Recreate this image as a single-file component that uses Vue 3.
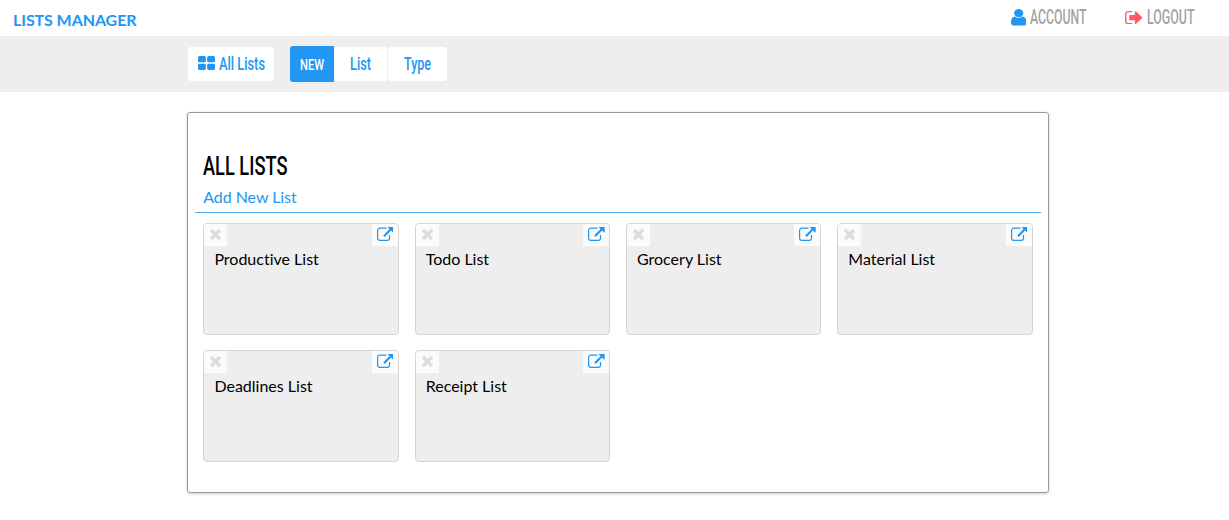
<script setup>
import { h } from 'vue'

const lists = ['Productive List', 'Todo List', 'Grocery List', 'Material List', 'Deadlines List', 'Receipt List']

const cell = 'v384q0 52-38 90t-90 38h-512q-52 0-90-38t-38-90v-384q0-52 38-90t90-38h512q52 0 90 38t38 90z'
const icons = {
  user: {
    box: '256 128 1280 1536',
    d: 'M1536 1399q0 109-62.5 187t-150.5 78h-854q-88 0-150.5-78t-62.5-187q0-85 8.5-160.5t31.5-152 58.5-131 94-89 134.5-34.5q131 128 313 128t313-128q76 0 134.5 34.5t94 89 58.5 131 31.5 152 8.5 160.5zm-256-887q0 159-112.5 271.5t-271.5 112.5-271.5-112.5-112.5-271.5 112.5-271.5 271.5-112.5 271.5 112.5 112.5 271.5z'
  },
  exit: {
    box: '64 256 1568 1280',
    d: 'M704 1440q0 4 1 20t.5 26.5-3 23.5-10 19.5-20.5 6.5h-320q-119 0-203.5-84.5t-84.5-203.5v-704q0-119 84.5-203.5t203.5-84.5h320q13 0 22.5 9.5t9.5 22.5q0 4 1 20t.5 26.5-3 23.5-10 19.5-20.5 6.5h-320q-66 0-113 47t-47 113v704q0 66 47 113t113 47h312l11.5 1 11.5 3 8 5.5 7 9 2 13.5zm928-544q0 26-19 45l-544 544q-19 19-45 19t-45-19-19-45v-288h-448q-26 0-45-19t-19-45v-384q0-26 19-45t45-19h448v-288q0-26 19-45t45-19 45 19l544 544q19 19 19 45z'
  },
  grid: {
    box: '64 128 1664 1408',
    d: `M832 1024${cell}M832 256${cell}M1728 1024${cell}M1728 256${cell}`
  },
  open: {
    box: '0 64 1792 1472',
    d: 'M1408 928v320q0 119-84.5 203.5t-203.5 84.5h-832q-119 0-203.5-84.5t-84.5-203.5v-832q0-119 84.5-203.5t203.5-84.5h704q14 0 23 9t9 23v64q0 14-9 23t-23 9h-704q-66 0-113 47t-47 113v832q0 66 47 113t113 47h832q66 0 113-47t47-113v-320q0-14 9-23t23-9h64q14 0 23 9t9 23zm384-864v512q0 26-19 45t-45 19-45-19l-176-176-652 652q-10 10-23 10t-23-10l-114-114q-10-10-10-23t10-23l652-652-176-176q-19-19-19-45t19-45 45-19h512q26 0 45 19t19 45z'
  },
  close: {
    box: '302 366 1188 1188',
    d: 'M1490 1322q0 40-28 68l-136 136q-28 28-68 28t-68-28l-294-294-294 294q-28 28-68 28t-68-28l-136-136q-28-28-28-68t28-68l294-294-294-294q-28-28-28-68t28-68l136-136q28-28 68-28t68 28l294 294 294-294q28-28 68-28t68 28l136 136q28 28 28 68t-28 68l-294 294 294 294q28 28 28 68z'
  }
}

const Icon = ({ name }) =>
  h('svg', { viewBox: icons[name].box, preserveAspectRatio: 'none', fill: 'currentColor', 'aria-hidden': 'true' }, [
    h('path', { d: icons[name].d })
  ])
Icon.props = ['name']

// Condensed label: the text is fitted to the given width.
const Narrow = ({ text, width, height }) =>
  h('svg', { width, height, overflow: 'visible', fill: 'currentColor' }, [
    h('text', { x: 0, y: height, textLength: width, lengthAdjust: 'spacingAndGlyphs' }, text)
  ])
Narrow.props = ['text', 'width', 'height']
</script>

<template>
  <div class="page">
    <header class="top">
      <span class="brand">LISTS MANAGER</span>
      <nav class="user-nav">
        <a class="account"><Icon name="user" class="i-user" /><Narrow text="ACCOUNT" :width="56.5" :height="14" /></a>
        <a class="logout"><Icon name="exit" class="i-exit" /><Narrow text="LOGOUT" :width="47.5" :height="14" /></a>
      </nav>
    </header>
    <div class="toolbar">
      <a class="btn all"><Icon name="grid" class="i-grid" /><Narrow text="All Lists" :width="46" :height="13.6" /></a>
      <div class="group">
        <span class="new"><Narrow text="NEW" :width="24" :height="12" /></span>
        <a class="btn list"><Narrow text="List" :width="21" :height="13.6" /></a>
        <a class="btn type"><Narrow text="Type" :width="27" :height="13.6" /></a>
      </div>
    </div>
    <main class="panel">
      <h1><Narrow text="ALL LISTS" :width="84.5" :height="19" /></h1>
      <a class="add">Add New List</a>
      <div class="rule"></div>
      <div class="tiles">
        <article v-for="name in lists" :key="name" class="tile">
          <div class="tile-bar">
            <span class="x-box"><Icon name="close" class="i-close" /></span>
            <span class="open-box"><Icon name="open" class="i-open" /></span>
          </div>
          <p>{{ name }}</p>
        </article>
      </div>
    </main>
  </div>
</template>

<style>
body { margin: 0; background: #fff; }
</style>

<style scoped>
.page { height: 520px; overflow: hidden; font: 16px/24px Lato, sans-serif; font-variant-ligatures: none; color: #000; }
svg { display: block; flex: none; }
.top { height: 36px; display: flex; justify-content: space-between; box-sizing: border-box; padding: 8px 34.5px 0 13px; }
.brand { font-weight: 700; color: #2196f3; letter-spacing: -.08px; }
.user-nav { display: flex; gap: 39px; font: 500 19.5px Roboto, sans-serif; color: #a3a3a3; }
.user-nav a { display: flex; align-items: flex-start; padding-top: 2px; }
.i-user { width: 15.4px; height: 16.6px; margin: -1px 3.5px 0 0; color: #2196f3; }
.i-exit { width: 17.3px; height: 13.4px; margin: .5px 4.5px 0 0; color: #ff5a5f; }
.toolbar { height: 56px; background: #eee; display: flex; align-items: center; gap: 16px; box-sizing: border-box; padding-left: 188px; color: #2196f3; font: 500 19px Roboto, sans-serif; }
.btn { height: 34px; box-sizing: border-box; background: #fff; border-radius: 3px; display: flex; padding-top: 9px; }
.all { width: 86px; padding-left: 10px; }
.i-grid { width: 17px; height: 14px; margin-right: 3.5px; }
.group { display: flex; align-items: center; }
.new { width: 44px; height: 36px; box-sizing: border-box; background: #2196f3; color: #fff; border-radius: 3px 0 0 3px; padding: 12px 0 0 10px; font-size: 15.2px; }
.list { width: 53px; padding-left: 16px; border-radius: 0 3px 3px 0; margin-right: 1px; }
.type { width: 59px; padding-left: 15.5px; }
.panel { width: 862px; height: 381px; box-sizing: border-box; margin: 20px 0 0 187px; border: 1px solid #999; border-radius: 3px; box-shadow: 0 1px 3px rgba(0, 0, 0, .2); padding: 43px 7px 0; }
h1 { margin: 0 0 10px 8px; font: 500 26px Roboto, sans-serif; }
.add { display: block; margin-left: 8.2px; color: #2196f3; height: 27px; letter-spacing: -.05px; }
.rule { height: 1px; background: #51a9ee; }
.tiles { display: grid; grid-template-columns: repeat(4, 1fr); gap: 15px 15.9px; margin: 10px 8.3px 0 8.4px; }
.tile { height: 112px; box-sizing: border-box; background: #eee; border: 1px solid #d5d5d5; border-radius: 4px; }
.tile-bar { display: flex; justify-content: space-between; }
.x-box, .open-box { height: 22px; box-sizing: border-box; background: #fbfbfb; }
.x-box { width: 23px; padding: 5px 0 0 6px; border-top-left-radius: 3px; }
.open-box { width: 26px; padding: 3px 0 0 4.9px; border-top-right-radius: 3px; color: #2196f3; }
.i-close { width: 11px; height: 11px; color: #ddd; }
.i-open { width: 16.7px; height: 14px; }
.tile p { margin: 1px 0 0 10px; }
</style>
